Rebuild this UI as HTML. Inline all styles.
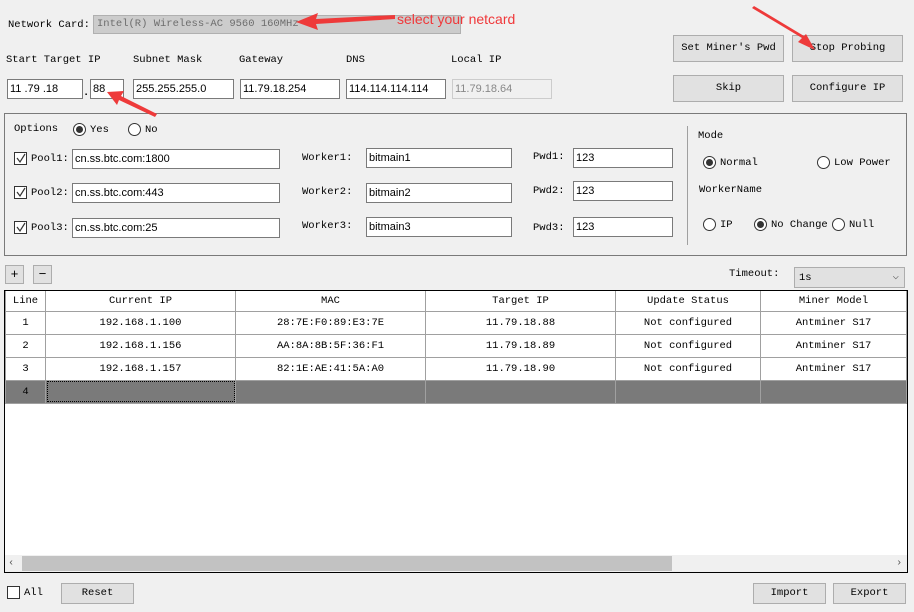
<!DOCTYPE html>
<html><head><meta charset="utf-8"><style>
*{box-sizing:border-box;margin:0;padding:0}
body{width:914px;height:612px;background:#f0f0f0;position:relative;overflow:hidden;font-family:"Liberation Mono","Noto Serif CJK SC",monospace;font-size:10.5px;color:#000}
.a{position:absolute;white-space:nowrap}
.in{position:absolute;background:#fff;border:1px solid #7a7a7a;padding:2px 2px;font-family:"Liberation Sans",sans-serif;font-size:11px;height:20px;line-height:15px}
.btn{position:absolute;background:#e1e1e1;border:1px solid #adadad;text-align:center;font-size:10.5px}
.rd{position:absolute;width:13px;height:13px;border:1px solid #333;border-radius:50%;background:#fff}
.rd.on::after{content:"";position:absolute;left:2px;top:2px;width:7px;height:7px;border-radius:50%;background:#333}
.cb{position:absolute;width:13px;height:13px;border:1px solid #333;background:#fff}
table{border-collapse:collapse;position:absolute;left:5px;top:291px}
td{border:1px solid #a0a0a0;text-align:center;height:23px;font-size:10.5px;background:#fff;padding:0}
tr.h td{height:20px;border-top:none}
tr.g td{background:#7a7a7a}
</style></head><body>
<div class="a" style="left:8px;top:19px">Network Card:</div>
<div class="a" style="left:93px;top:15px;width:368px;height:19px;background:#cccccc;border:1px solid #b0b0b0;color:#6d6d6d;padding:2px 3px">Intel(R) Wireless-AC 9560 160MHz</div>

<div class="a" style="left:6px;top:54px">Start Target IP</div>
<div class="a" style="left:133px;top:54px">Subnet Mask</div>
<div class="a" style="left:239px;top:54px">Gateway</div>
<div class="a" style="left:346px;top:54px">DNS</div>
<div class="a" style="left:451px;top:54px">Local IP</div>
<div class="in" style="left:7px;top:79px;width:76px">11 .79 .18</div>
<div class="a" style="left:83px;top:87px;font-weight:bold">.</div>
<div class="in" style="left:90px;top:79px;width:34px">88</div>
<div class="in" style="left:133px;top:79px;width:101px">255.255.255.0</div>
<div class="in" style="left:240px;top:79px;width:100px">11.79.18.254</div>
<div class="in" style="left:346px;top:79px;width:100px">114.114.114.114</div>
<div class="in" style="left:452px;top:79px;width:100px;border-color:#ccc;background:#f0f0f0;color:#888">11.79.18.64</div>

<div class="btn" style="left:673px;top:35px;width:111px;height:27px;line-height:25px">Set Miner's Pwd</div>
<div class="btn" style="left:792px;top:35px;width:111px;height:27px;line-height:25px">Stop Probing</div>
<div class="btn" style="left:673px;top:75px;width:111px;height:27px;line-height:25px">Skip</div>
<div class="btn" style="left:792px;top:75px;width:111px;height:27px;line-height:25px">Configure IP</div>

<div class="a" style="left:4px;top:113px;width:903px;height:143px;border:1px solid #7a7a7a"></div>
<div class="a" style="left:14px;top:123px">Options</div>
<div class="rd on" style="left:73px;top:123px"></div><div class="a" style="left:90px;top:124px">Yes</div>
<div class="rd" style="left:128px;top:123px"></div><div class="a" style="left:145px;top:124px">No</div>

<div class="cb" style="left:14px;top:152px"></div><div class="a" style="left:31px;top:153px">Pool1:</div>
<div class="cb" style="left:14px;top:186px"></div><div class="a" style="left:31px;top:187px">Pool2:</div>
<div class="cb" style="left:14px;top:221px"></div><div class="a" style="left:31px;top:222px">Pool3:</div>
<div class="in" style="left:72px;top:149px;width:208px">cn.ss.btc.com:1800</div>
<div class="in" style="left:72px;top:183px;width:208px">cn.ss.btc.com:443</div>
<div class="in" style="left:72px;top:218px;width:208px">cn.ss.btc.com:25</div>
<div class="a" style="left:302px;top:152px">Worker1:</div>
<div class="a" style="left:302px;top:186px">Worker2:</div>
<div class="a" style="left:302px;top:220px">Worker3:</div>
<div class="in" style="left:366px;top:148px;width:146px">bitmain1</div>
<div class="in" style="left:366px;top:183px;width:146px">bitmain2</div>
<div class="in" style="left:366px;top:217px;width:146px">bitmain3</div>
<div class="a" style="left:533px;top:151px">Pwd1:</div>
<div class="a" style="left:533px;top:185px">Pwd2:</div>
<div class="a" style="left:533px;top:222px">Pwd3:</div>
<div class="in" style="left:573px;top:148px;width:100px">123</div>
<div class="in" style="left:573px;top:181px;width:100px">123</div>
<div class="in" style="left:573px;top:217px;width:100px">123</div>
<div class="a" style="left:687px;top:126px;width:1px;height:119px;background:#a0a0a0"></div>
<div class="a" style="left:698px;top:130px">Mode</div>
<div class="rd on" style="left:703px;top:156px"></div><div class="a" style="left:720px;top:157px">Normal</div>
<div class="rd" style="left:817px;top:156px"></div><div class="a" style="left:834px;top:157px">Low Power</div>
<div class="a" style="left:699px;top:184px">WorkerName</div>
<div class="rd" style="left:703px;top:218px"></div><div class="a" style="left:720px;top:219px">IP</div>
<div class="rd on" style="left:754px;top:218px"></div><div class="a" style="left:771px;top:219px">No Change</div>
<div class="rd" style="left:832px;top:218px"></div><div class="a" style="left:849px;top:219px">Null</div>

<div class="btn" style="left:5px;top:265px;width:19px;height:19px;line-height:17px;font-size:13px">+</div>
<div class="btn" style="left:33px;top:265px;width:19px;height:19px;line-height:17px;font-size:13px">−</div>
<div class="a" style="left:729px;top:268px">Timeout:</div>
<div class="a" style="left:794px;top:267px;width:111px;height:21px;background:#e1e1e1;border:1px solid #adadad;padding:4px 4px">1s<span style="position:absolute;right:5px;top:2px;color:#555">⌵</span></div>

<div class="a" style="left:4px;top:290px;width:904px;height:283px;border:1px solid #000;background:#fff"></div>
<table>
<tr class="h"><td style="width:40px">Line</td><td style="width:190px">Current IP</td><td style="width:190px">MAC</td><td style="width:190px">Target IP</td><td style="width:145px">Update Status</td><td style="width:146px">Miner Model</td></tr>
<tr><td>1</td><td>192.168.1.100</td><td>28:7E:F0:89:E3:7E</td><td>11.79.18.88</td><td>Not configured</td><td>Antminer S17</td></tr>
<tr><td>2</td><td>192.168.1.156</td><td>AA:8A:8B:5F:36:F1</td><td>11.79.18.89</td><td>Not configured</td><td>Antminer S17</td></tr>
<tr><td>3</td><td>192.168.1.157</td><td>82:1E:AE:41:5A:A0</td><td>11.79.18.90</td><td>Not configured</td><td>Antminer S17</td></tr>
<tr class="g"><td>4</td><td style="outline:1px dotted #000;outline-offset:-2px"></td><td></td><td></td><td></td><td></td></tr>
</table>
<div class="a" style="left:5px;top:555px;width:902px;height:17px;background:#f0f0f0"></div>
<div class="a" style="left:22px;top:556px;width:650px;height:15px;background:#c2c2c2"></div>
<div class="a" style="left:8px;top:557px;color:#555">‹</div>
<div class="a" style="left:896px;top:557px;color:#555">›</div>

<div class="cb" style="left:7px;top:586px"></div><div class="a" style="left:24px;top:587px">All</div>
<div class="btn" style="left:61px;top:583px;width:73px;height:21px;line-height:19px">Reset</div>
<div class="btn" style="left:753px;top:583px;width:73px;height:21px;line-height:19px">Import</div>
<div class="btn" style="left:833px;top:583px;width:73px;height:21px;line-height:19px">Export</div>

<div class="a" style="left:397px;top:11px;font-family:'Liberation Sans',sans-serif;font-size:14px;color:#f0383a">select your netcard</div>
<svg class="a" style="left:0;top:0" width="914" height="612">
<g fill="none" stroke="#333" stroke-width="1.2">
<polyline points="17,158 20,162 25,154"/>
<polyline points="17,192 20,196 25,188"/>
<polyline points="17,227 20,231 25,223"/>
</g>
<g fill="#ee3a3a">
<polygon points="395,15 316,19 318,13 296,22 318,30 316,24 395,19"/>
<polygon points="157,114 121,96 124,91 107,92 117,105 119,100 155,117"/>
<polygon points="752,8 802,38 798,42 815,50 806,34 804,36 754,6"/>
</g></svg>
</body></html>
